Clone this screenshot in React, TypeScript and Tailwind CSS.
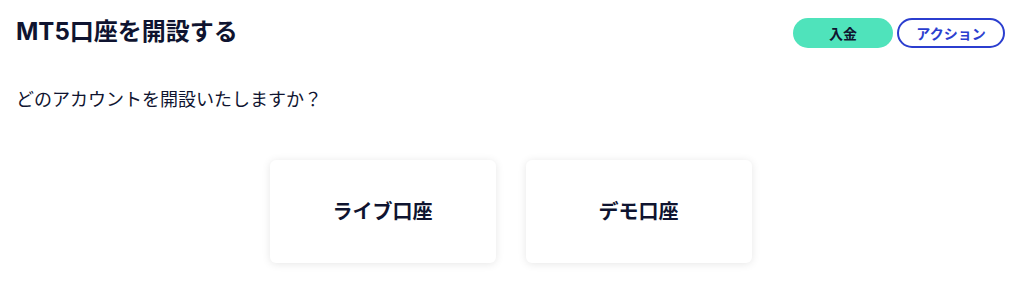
const font = { fontFamily: 'Inter, "Noto Sans CJK JP", sans-serif' }

function AccountCard({ label }: { label: string }) {
  return (
    <button className="flex h-[103px] w-[226px] items-center justify-center rounded-md bg-white text-[20px] font-bold text-[#0f1430] shadow-[0_1px_8px_rgba(0,0,0,0.10)]">
      {label}
    </button>
  )
}

export default function App() {
  return (
    <div className="h-[304px] w-full bg-white pl-4 pr-[15px] text-[#0f1430]" style={font}>
      {/* ヘッダー */}
      <div className="flex items-center justify-between pt-4">
        <h1 className="text-[24px] font-bold leading-8">MT5口座を開設する</h1>
        <div className="mt-0.5 flex items-center gap-1">
          <button className="h-[30px] w-[100px] rounded-full bg-[#4fe3bb] text-[14px] font-bold text-[#0f1430]">
            入金
          </button>
          <button className="h-[30px] w-[108px] rounded-full border-2 border-[#2b3ecf] text-[14px] font-bold text-[#2b3ecf]">
            アクション
          </button>
        </div>
      </div>

      <p className="mt-[38px] text-[18px] leading-7">どのアカウントを開設いたしますか？</p>

      {/* 口座の種類 */}
      <div className="mt-[46px] flex justify-center gap-[30px]">
        <AccountCard label="ライブ口座" />
        <AccountCard label="デモ口座" />
      </div>
    </div>
  )
}
